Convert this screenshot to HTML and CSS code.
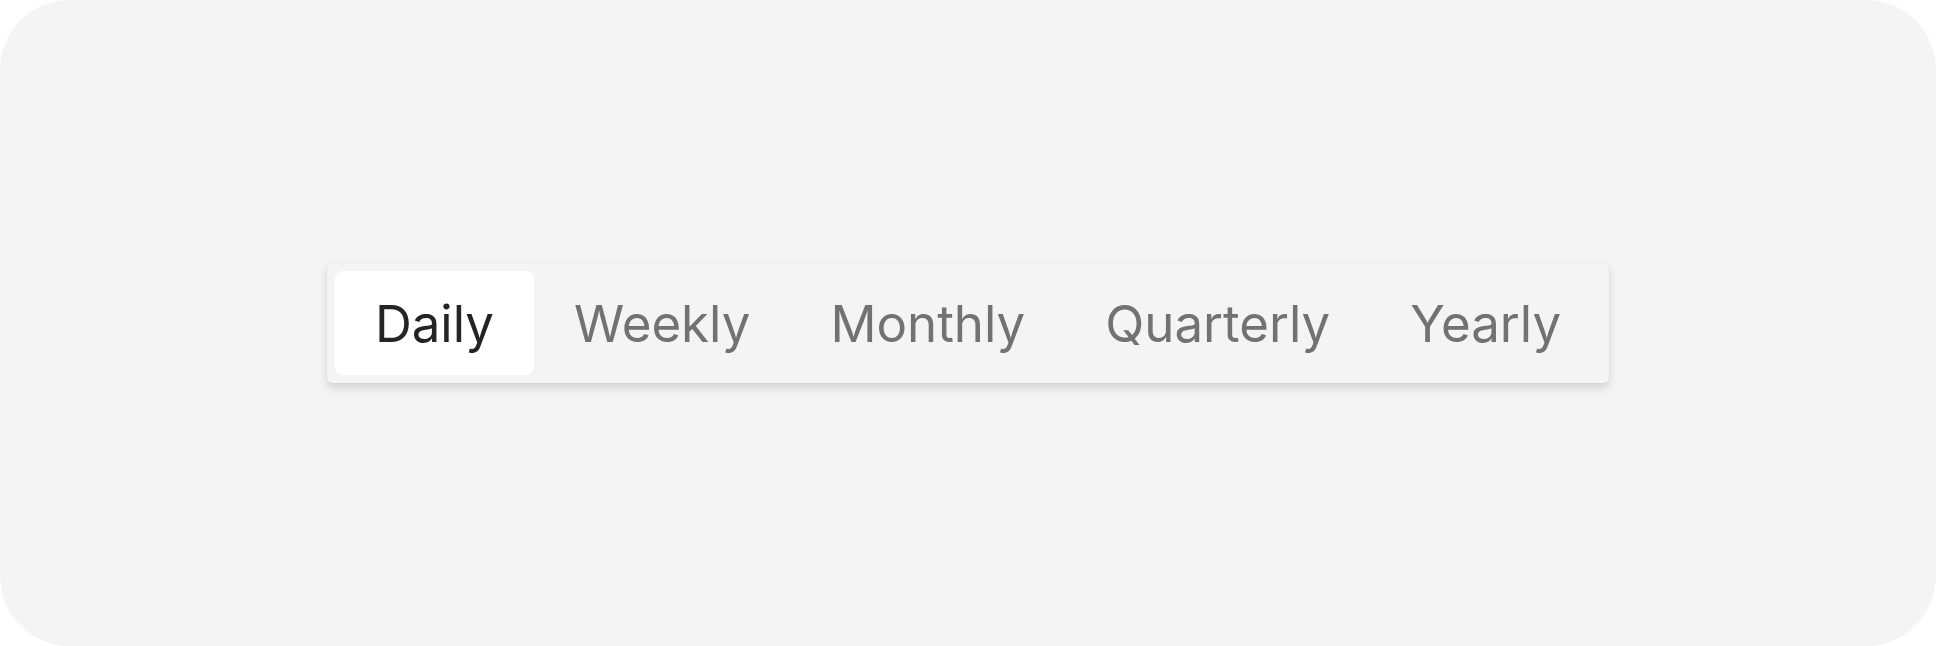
FILE: index.html
```html
<!DOCTYPE html>
<html lang="en">

<head>
    <meta charset="UTF-8" />
    <meta name="viewport" content="width=device-width, initial-scale=1.0" />
    <title>Period</title>
    <link rel="stylesheet" href="styles.css">
</head>

<body>
    <div class="frame">
        <div class="tabs">
            <button class="tab active">Daily</button>
            <button class="tab">Weekly</button>
            <button class="tab">Monthly</button>
            <button class="tab">Quarterly</button>
            <button class="tab">Yearly</button>
        </div>
    </div>
</body>

</html>
```

FILE: styles.css
```css
* {
    margin: 0;
    padding: 0;
    box-sizing: border-box;
    font-family: 'Inter', 'Noto Sans', sans-serif;
}

body {
    background-color: #ffffff;
}

.frame {
    width: 100vw;
    height: 100vh;
    border-radius: 70px;
    background-color: #f4f4f4;
    display: flex;
    align-items: center;
    justify-content: center;
}

.tabs {
    display: flex;
    padding: 8px;
    background-color: #f4f4f4;
    border-radius: 6px;
    box-shadow: 0 5px 10px rgba(0, 0, 0, 0.14), 0 0 2px rgba(0, 0, 0, 0.06);
}

.tab {
    border: 0;
    background: none;
    height: 104px;
    padding: 0 40px;
    font-size: 51px;
    font-weight: 400;
    color: #727272;
    border-radius: 8px;
    cursor: pointer;
}

.tab.active {
    background-color: #ffffff;
    color: #242424;
}
```
